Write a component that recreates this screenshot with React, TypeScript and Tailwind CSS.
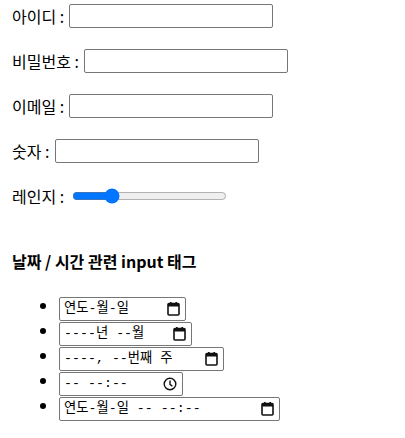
const font = { fontFamily: '"Noto Sans CJK KR", "Noto Sans", sans-serif' };

function Calendar() {
  return (
    <svg width="13" height="14" viewBox="0 0 13 14" className="shrink-0">
      <rect x="1" y="1.5" width="11" height="11.5" rx="1" fill="none" stroke="#111" strokeWidth="1.6" />
      <rect x="1" y="1.5" width="11" height="3" fill="#111" />
      <rect x="3" y="0" width="1.6" height="3" fill="#111" />
      <rect x="8.4" y="0" width="1.6" height="3" fill="#111" />
    </svg>
  );
}

function Clock() {
  return (
    <svg width="14" height="14" viewBox="0 0 14 14" className="shrink-0">
      <circle cx="7" cy="7" r="5.8" fill="none" stroke="#111" strokeWidth="1.4" />
      <path d="M7 3.6V7.3L9.4 9.2" fill="none" stroke="#111" strokeWidth="1.4" />
    </svg>
  );
}

function FakeInput({ text, width, icon }: { text: string; width: string; icon: "cal" | "clock" }) {
  return (
    <div
      className={`flex items-center justify-between h-[24px] border border-[#767676] rounded-[2px] pl-[4px] pr-[5px] bg-white ${width}`}
    >
      <span className="text-[13.3px] leading-none text-black whitespace-pre" style={{ fontFamily: '"Liberation Mono", "Noto Sans CJK KR", monospace' }}>
        {text}
      </span>
      {icon === "cal" ? <Calendar /> : <Clock />}
    </div>
  );
}

export default function App() {
  const rows = [
    { label: "아이디", type: "text" },
    { label: "비밀번호", type: "password" },
    { label: "이메일", type: "email" },
    { label: "숫자", type: "number" },
  ];
  const dates = [
    { text: "연도-월-일", width: "w-[127px]", icon: "cal" as const },
    { text: "----년 --월", width: "w-[133px]", icon: "cal" as const },
    { text: "----, --번째 주", width: "w-[165px]", icon: "cal" as const },
    { text: "-- --:--", width: "w-[124px]", icon: "clock" as const },
    { text: "연도-월-일 -- --:--", width: "w-[221px]", icon: "cal" as const },
  ];
  return (
    <div className="w-[405px] h-[438px] bg-white text-black pl-[12px] pt-[4px]" style={font}>
      <div className="flex flex-col gap-[22px]">
        {rows.map((r) => (
          <div key={r.label} className="flex items-center h-[23px] text-[16px]">
            <span className="mr-[5px]">{r.label} :</span>
            <input
              type={r.type}
              className="w-[204px] h-[24px] border border-[#767676] rounded-[2px] bg-white outline-none"
            />
          </div>
        ))}
        <div className="flex items-center h-[23px] text-[16px]">
          <span className="mr-[8px]">레인지 :</span>
          <input type="range" defaultValue={23} className="w-[155px] accent-[#0075ff]" />
        </div>
      </div>
      <h3 className="mt-[42px] text-[16px] font-bold">날짜 / 시간 관련 input 태그</h3>
      <ul className="list-disc pl-[47px] mt-[20px] leading-[25px]">
        {dates.map((d) => (
          <li key={d.text} className="h-[25px]">
            <FakeInput text={d.text} width={d.width} icon={d.icon} />
          </li>
        ))}
      </ul>
    </div>
  );
}
